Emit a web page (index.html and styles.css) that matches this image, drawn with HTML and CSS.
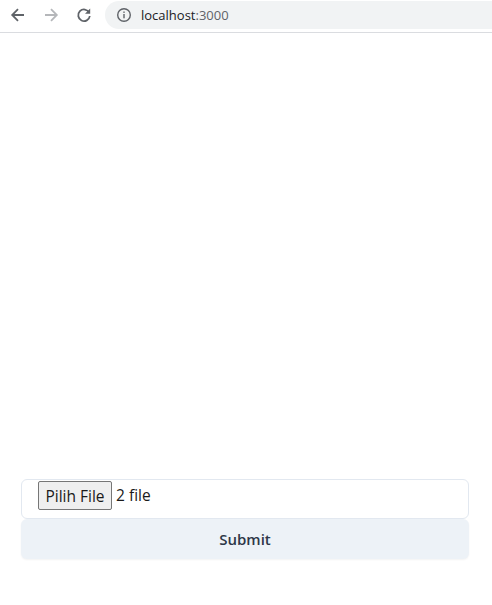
FILE: index.html
```html
<!DOCTYPE html>
<html>
<head>
<meta charset="utf-8">
<link rel="stylesheet" href="styles.css">
</head>
<body>
<div class="chrome">
  <div class="navs">
    <svg class="nav" width="18" height="18" viewBox="0 0 18 18"><path d="M15 9H3.5M9 3.2L3.2 9 9 14.8" fill="none" stroke="#5f6368" stroke-width="1.8"/></svg>
    <svg class="nav" width="18" height="18" viewBox="0 0 18 18"><path d="M3 9h11.5M9 3.2L14.8 9 9 14.8" fill="none" stroke="#b5b7ba" stroke-width="1.8"/></svg>
    <svg class="nav" width="18" height="18" viewBox="0 0 18 18"><path d="M14.2 6.6A5.8 5.8 0 1 0 14.8 10" fill="none" stroke="#5f6368" stroke-width="1.8"/><path d="M15.2 2.5v5.2H10z" fill="#5f6368"/></svg>
  </div>
  <div class="omnibox">
    <svg class="info" width="16" height="16" viewBox="0 0 16 16"><circle cx="8" cy="8" r="6.3" fill="none" stroke="#5f6368" stroke-width="1.4"/><rect x="7.3" y="7" width="1.4" height="4.3" fill="#5f6368"/><rect x="7.3" y="4.5" width="1.4" height="1.4" fill="#5f6368"/></svg>
    <span class="host">localhost</span><span class="port">:3000</span>
  </div>
</div>
<div class="main">
  <form class="form">
    <div class="filebox">
      <button type="button" class="filebtn">Pilih File</button>
      <span class="filename">2 file</span>
    </div>
    <button type="button" class="submit">Submit</button>
  </form>
</div>
</body>
</html>
```
FILE: styles.css
```css
html, body {
  margin: 0;
  padding: 0;
  background: #fff;
}
body {
  width: 492px;
  height: 605px;
  overflow: hidden;
  font-family: "Open Sans", "Noto Sans", sans-serif;
}
.chrome {
  height: 32px;
  display: flex;
  align-items: flex-start;
  border-bottom: 1px solid #dadce0;
  box-sizing: content-box;
}
.navs {
  display: flex;
  gap: 15px;
  padding: 6px 0 0 9px;
  width: 96px;
}
.omnibox {
  margin-top: 1px;
  flex: 1;
  height: 28px;
  background: #f1f3f4;
  border-radius: 14px 0 0 14px;
  display: flex;
  align-items: center;
  padding-left: 11px;
  font-family: "Open Sans", sans-serif;
  font-size: 13px;
}
.info { margin-right: 9px; }
.host { color: #202124; }
.port { color: #5f6368; }
.main {
  height: 572px;
  display: flex;
  flex-direction: column;
  justify-content: flex-end;
  padding: 0 23px 46px 21px;
  box-sizing: border-box;
}
.form {
  display: flex;
  flex-direction: column;
  margin: 0;
}
.filebox {
  height: 40px;
  box-sizing: border-box;
  border: 1px solid #e2e8f0;
  border-radius: 6px;
  display: flex;
  align-items: flex-start;
  padding: 1px 0 0 16px;
}
.filebtn {
  height: 29px;
  width: 74px;
  padding: 0;
  font-family: "Open Sans", sans-serif;
  font-size: 15.5px;
  color: #1a1a1a;
  background: #efefef;
  border: 1px solid #767676;
  border-radius: 2px;
  margin: 0;
}
.filename {
  font-size: 15.5px;
  color: #1a1a1a;
  margin-left: 4px;
  line-height: 29px;
}
.submit {
  height: 40px;
  border: none;
  background: #edf2f7;
  border-radius: 6px;
  font-family: "Open Sans", sans-serif;
  font-weight: 600;
  font-size: 15px;
  color: #2d3748;
  box-shadow: 0 1px 2px rgba(0,0,0,0.05);
  margin: 0;
}
```
